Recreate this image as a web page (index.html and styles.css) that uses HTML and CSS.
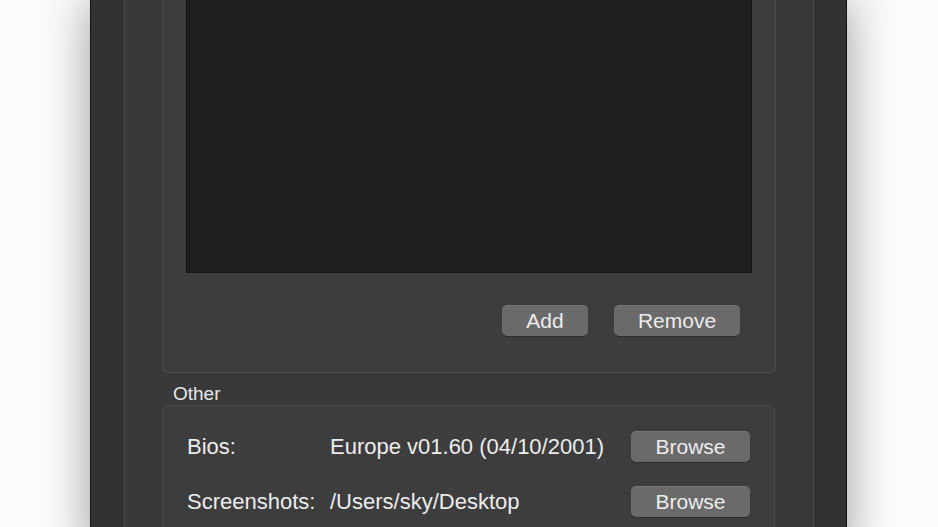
FILE: index.html
```html
<!doctype html>
<html lang="en">

<head>
    <meta charset="UTF-8">
    <title>Preferences</title>
    <link rel="stylesheet" href="styles.css">
</head>

<body>
    <div class="window">
        <div class="panel">
            <div class="group group-top">
                <div class="list"></div>
                <div class="btn-row">
                    <button class="btn btn-add">Add</button>
                    <button class="btn btn-remove">Remove</button>
                </div>
            </div>

            <div class="group-title">Other</div>

            <div class="group group-other">
                <div class="row">
                    <span class="label">Bios:</span>
                    <span class="value">Europe v01.60 (04/10/2001)</span>
                    <button class="btn btn-browse">Browse</button>
                </div>
                <div class="row">
                    <span class="label">Screenshots:</span>
                    <span class="value">/Users/sky/Desktop</span>
                    <button class="btn btn-browse">Browse</button>
                </div>
            </div>
        </div>
    </div>
</body>

</html>
```

FILE: styles.css
```css
* {
    margin: 0;
    padding: 0;
    box-sizing: border-box;
}

html,
body {
    height: 100%;
}

body {
    background: #fbfbfb;
    overflow: hidden;
    font-family: "Liberation Sans", Arial, sans-serif;
    color: #ececec;
}

.window {
    margin-left: 90px;
    width: 757px;
    height: 560px;
    background: #323232;
    border-left: 1px solid #141414;
    border-right: 1px solid #141414;
    box-shadow: 0 0 45px rgba(0, 0, 0, 0.38);
}

.panel {
    margin-left: 33px;
    width: 690px;
    height: 100%;
    background: #393939;
    border-left: 1px solid #4a4a4a;
    border-right: 1px solid #4a4a4a;
    padding-left: 37px;
}

.group {
    background: #3d3d3d;
    border: 1px solid #4b4b4b;
    border-radius: 6px;
}

.group-top {
    width: 614px;
    border-top: none;
    border-radius: 0 0 6px 6px;
    padding: 0 23px 36px 23px;
}

.list {
    height: 273px;
    background: #1f1f1f;
    border: 1px solid #161616;
    border-top: none;
}

.btn-row {
    display: flex;
    justify-content: flex-end;
    gap: 26px;
    margin: 32px 12px 0 0;
}

.btn {
    height: 31px;
    border: none;
    border-radius: 5px;
    background: #6a6a6a;
    box-shadow: 0 1px 0 rgba(0, 0, 0, 0.25), inset 0 1px 0 rgba(255, 255, 255, 0.08);
    color: #ececec;
    font-family: "Liberation Sans", Arial, sans-serif;
    font-size: 21px;
    line-height: 31px;
    text-align: center;
}

.btn-add {
    width: 86px;
}

.btn-remove {
    width: 126px;
}

.btn-browse {
    width: 119px;
    margin-left: auto;
}

.group-title {
    margin: 10px 0 0 11px;
    height: 22px;
    font-size: 19px;
    line-height: 22px;
    color: #e6e6e6;
}

.group-other {
    width: 613px;
    padding: 25px 24px 20px 24px;
}

.row {
    display: flex;
    align-items: center;
    height: 31px;
    margin-bottom: 24px;
    font-size: 22px;
}

.label {
    width: 143px;
}

.value {
    white-space: nowrap;
}
```
